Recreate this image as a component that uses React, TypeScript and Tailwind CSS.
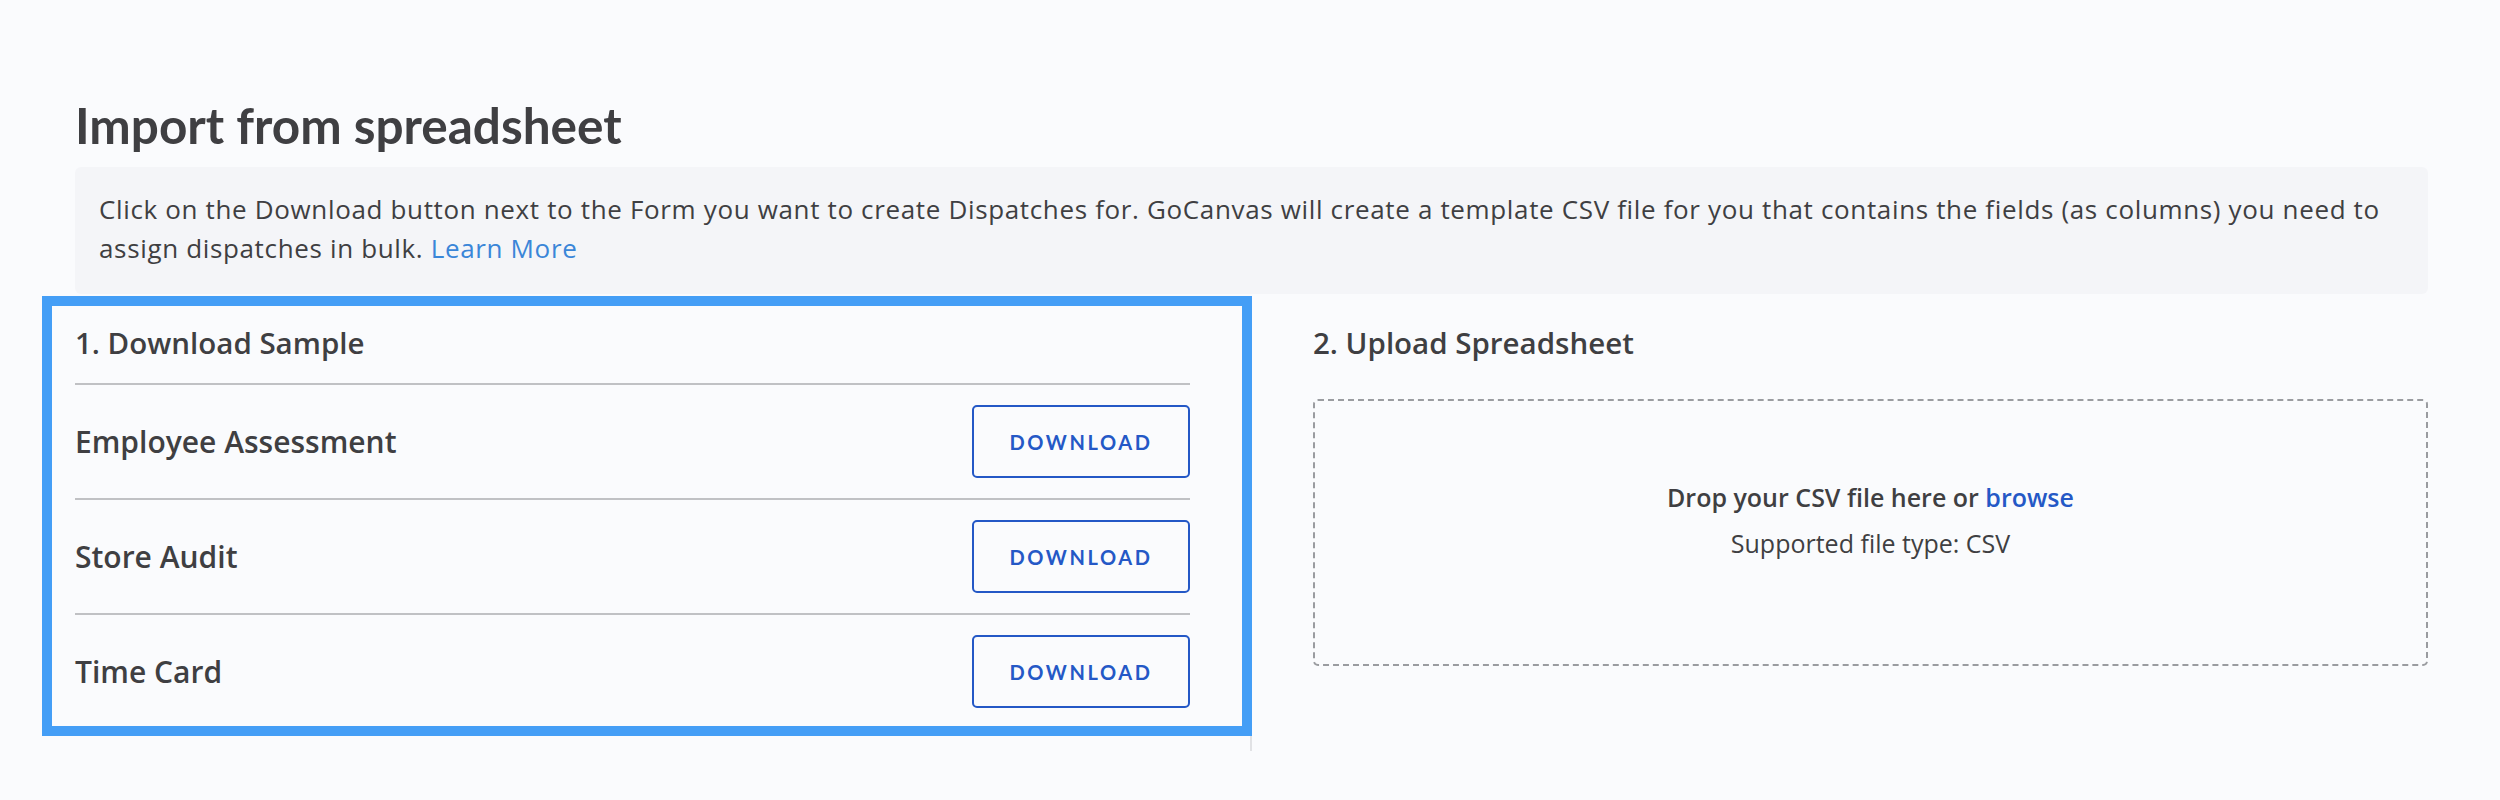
import React from 'react';

const forms = ['Employee Assessment', 'Store Audit', 'Time Card'];

const DownloadButton = () => (
  <button className="w-[218px] h-[73px] shrink-0 border-2 border-[#2458c6] rounded-[5px] text-[#2458c6] text-[20px] font-bold tracking-[0.13em] flex items-center justify-center bg-transparent font-['Lato','Liberation_Sans',sans-serif]">
    DOWNLOAD
  </button>
);

export default function App() {
  return (
    <div className="min-h-screen bg-[#fafbfd] text-[#3f3f42] font-['Open_Sans','Liberation_Sans',sans-serif]">
      <div className="ml-[75px] w-[2353px] pt-[99px]">
        <h1 className="text-[49.5px] leading-[52px] font-bold font-['Lato','Liberation_Sans',sans-serif]">
          Import from spreadsheet
        </h1>

        {/* Intro */}
        <div className="mt-[16px] bg-[#f4f5f8] rounded-[6px] pl-[24px] pr-[24px] pt-[23px] pb-[26px] text-[26px] leading-[39px] tracking-[0.025em]">
          Click on the Download button next to the Form you want to create Dispatches for. GoCanvas will create a
          template CSV file for you that contains the fields (as columns) you need to assign dispatches in bulk.{' '}
          <a className="text-[#3a86d8]">Learn More</a>
        </div>

        <div className="grid grid-cols-2 gap-[123px] mt-[2px]">
          {/* Step 1 */}
          <div>
            <div className="-ml-[33px] -mr-[62px] border-[10px] border-[#449ef6] pl-[23px] pr-[52px]">
              <div className="pt-[19px] pb-[22px] text-[29.5px] leading-[36px] font-semibold">1. Download Sample</div>
              {forms.map((f, i) => (
                <div
                  key={f}
                  className={`flex items-center justify-between border-t-2 border-[#c0c1c4] pt-[20px] ${
                    i === forms.length - 1 ? 'pb-[18px]' : 'pb-[20px]'
                  }`}
                >
                  <span className="text-[30px] leading-[36px] font-semibold">{f}</span>
                  <DownloadButton />
                </div>
              ))}
            </div>
            <div className="flex justify-end -mr-[62px]">
              <div className="w-[2px] h-[15px] bg-[#e1e2e5]" />
            </div>
          </div>

          {/* Step 2 */}
          <div className="pt-[29px]">
            <div className="text-[29.5px] leading-[36px] font-semibold">2. Upload Spreadsheet</div>
            <div className="mt-[38px] h-[267px] border-2 border-dashed border-[#9a9ca0] rounded-[5px] flex flex-col items-center pt-[73px] text-[25px] leading-[46px]">
              <div className="font-semibold">
                Drop your CSV file here or <a className="text-[#2458c6]">browse</a>
              </div>
              <div>Supported file type: CSV</div>
            </div>
          </div>
        </div>
      </div>
    </div>
  );
}
